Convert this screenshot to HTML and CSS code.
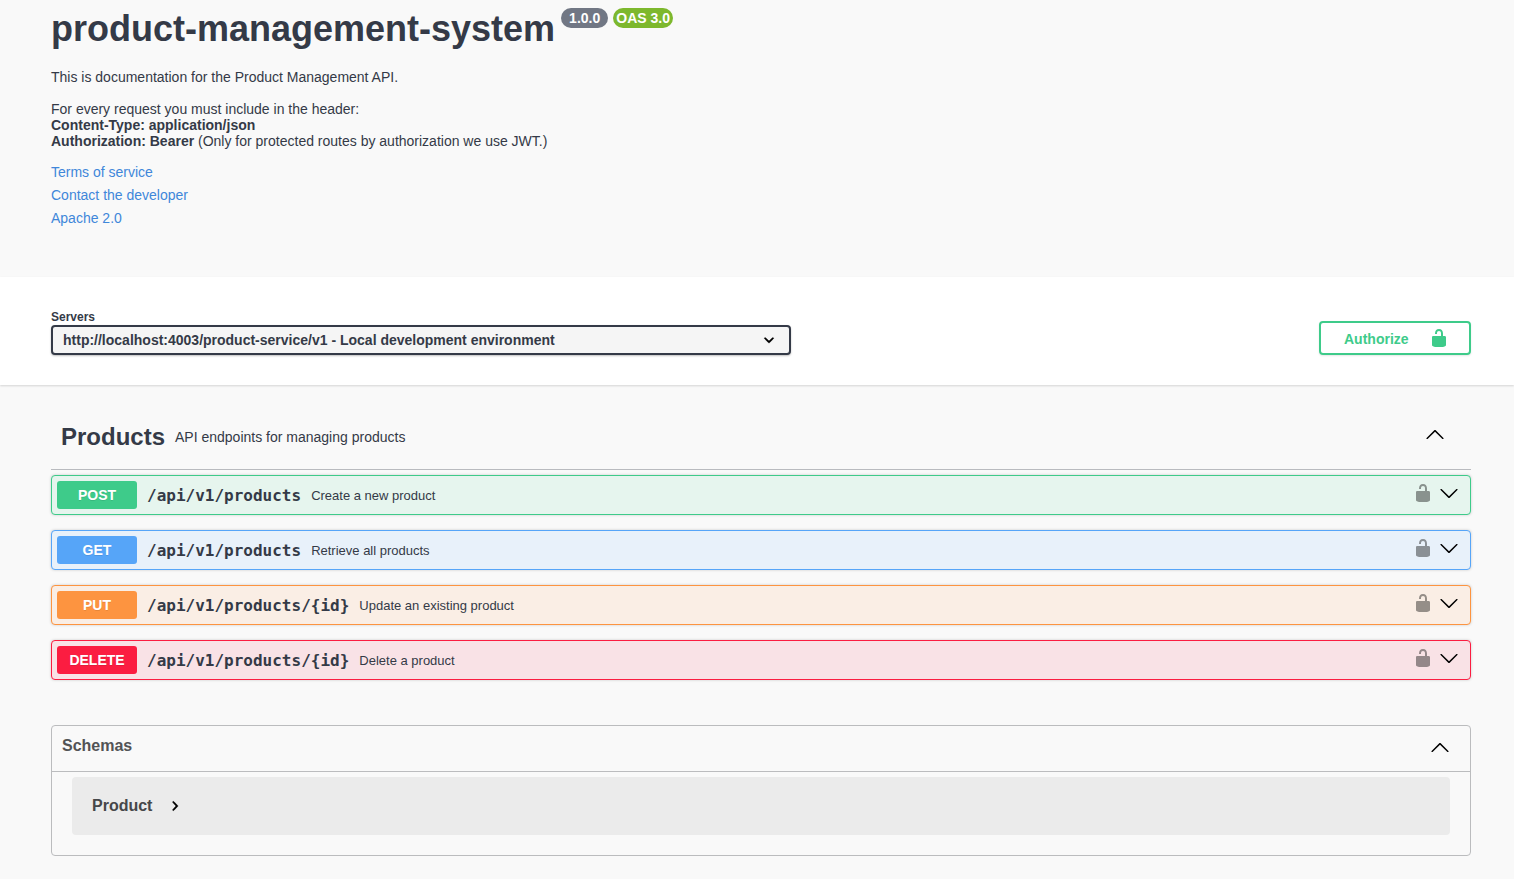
FILE: index.html
```html
<!DOCTYPE html>
<html lang="en">
<head>
<meta charset="utf-8">
<meta name="viewport" content="width=device-width, initial-scale=1">
<title>product-management-system</title>
<link rel="stylesheet" href="styles.css">
</head>
<body>
<svg class="sprite" aria-hidden="true">
  <symbol id="unlocked" viewBox="0 0 20 20"><path d="M15.8 8H14V5.6C14 2.703 12.665 1 10 1 7.334 1 6 2.703 6 5.6V6h2v-.801C8 3.754 8.797 3 10 3c1.203 0 2 .754 2 2.199V8H4c-.553 0-1 .646-1 1.199V17c0 .549.428 1.139.951 1.307l1.197.387C5.672 18.861 6.55 19 7.1 19h5.8c.549 0 1.428-.139 1.951-.307l1.196-.387c.524-.167.953-.757.953-1.306V9.199C17 8.646 16.352 8 15.8 8z"/></symbol>
  <symbol id="arrow-up" viewBox="0 0 20 20"><path d="M17.418 14.908c.272.268.709.268.979 0s.271-.701 0-.969l-7.908-7.83c-.27-.268-.707-.268-.979 0l-7.908 7.83c-.27.268-.27.701 0 .969.271.268.709.268.979 0L10 7.767l7.418 7.141z"/></symbol>
  <symbol id="arrow-down" viewBox="0 0 20 20"><path d="M17.418 6.109c.272-.268.709-.268.979 0s.271.701 0 .969l-7.908 7.83c-.27.268-.707.268-.979 0l-7.908-7.83c-.27-.268-.27-.701 0-.969.271-.268.709-.268.979 0L10 13.25l7.418-7.141z"/></symbol>
  <symbol id="chevron" viewBox="0 0 20 20"><path stroke="currentColor" stroke-width=".5" d="M13.418 7.859c.271-.268.709-.268.978 0 .27.268.272.701 0 .969l-3.908 3.83c-.27.268-.707.268-.979 0l-3.908-3.83c-.27-.267-.27-.701 0-.969.271-.268.709-.268.978 0L10 11l3.418-3.141z"/></symbol>
</svg>

<header class="wrapper info">
  <h1 class="title">product-management-system
    <span class="badges"><span class="badge">1.0.0</span><span class="badge badge-oas">OAS 3.0</span></span>
  </h1>
  <p>This is documentation for the Product Management API.</p>
  <p>For every request you must include in the header:<br>
  <strong>Content-Type: application/json</strong><br>
  <strong>Authorization: Bearer</strong> (Only for protected routes by authorization we use JWT.)</p>
  <ul class="links">
    <li><a href="#terms">Terms of service</a></li>
    <li><a href="#contact">Contact the developer</a></li>
    <li><a href="#license">Apache 2.0</a></li>
  </ul>
</header>

<section class="scheme">
  <div class="wrapper scheme-row">
    <div class="servers">
      <label for="servers">Servers</label>
      <div class="select-box">
        <select id="servers">
          <option>http://localhost:4003/product-service/v1 - Local development environment</option>
        </select>
        <svg class="icon" aria-hidden="true"><use href="#chevron"/></svg>
      </div>
    </div>
    <button class="authorize" type="button"><span>Authorize</span><svg class="icon" aria-hidden="true"><use href="#unlocked"/></svg></button>
  </div>
</section>

<main class="wrapper">
  <section>
    <div class="tag">
      <h2>Products</h2>
      <p>API endpoints for managing products</p>
      <button class="toggle" type="button" aria-label="Collapse Products"><svg class="icon" aria-hidden="true"><use href="#arrow-up"/></svg></button>
    </div>
    <div class="operations">
      <div class="operation post">
        <span class="method">POST</span><span class="path">/api/v1/products</span><span class="summary">Create a new product</span>
        <button class="lock" type="button" aria-label="Authorize POST"><svg class="icon" aria-hidden="true"><use href="#unlocked"/></svg></button>
        <button class="toggle" type="button" aria-label="Expand POST"><svg class="icon" aria-hidden="true"><use href="#arrow-down"/></svg></button>
      </div>
      <div class="operation get">
        <span class="method">GET</span><span class="path">/api/v1/products</span><span class="summary">Retrieve all products</span>
        <button class="lock" type="button" aria-label="Authorize GET"><svg class="icon" aria-hidden="true"><use href="#unlocked"/></svg></button>
        <button class="toggle" type="button" aria-label="Expand GET"><svg class="icon" aria-hidden="true"><use href="#arrow-down"/></svg></button>
      </div>
      <div class="operation put">
        <span class="method">PUT</span><span class="path">/api/v1/products/{id}</span><span class="summary">Update an existing product</span>
        <button class="lock" type="button" aria-label="Authorize PUT"><svg class="icon" aria-hidden="true"><use href="#unlocked"/></svg></button>
        <button class="toggle" type="button" aria-label="Expand PUT"><svg class="icon" aria-hidden="true"><use href="#arrow-down"/></svg></button>
      </div>
      <div class="operation delete">
        <span class="method">DELETE</span><span class="path">/api/v1/products/{id}</span><span class="summary">Delete a product</span>
        <button class="lock" type="button" aria-label="Authorize DELETE"><svg class="icon" aria-hidden="true"><use href="#unlocked"/></svg></button>
        <button class="toggle" type="button" aria-label="Expand DELETE"><svg class="icon" aria-hidden="true"><use href="#arrow-down"/></svg></button>
      </div>
    </div>
  </section>

  <section class="models">
    <h2><button class="models-head" type="button"><span>Schemas</span><svg class="icon" aria-hidden="true"><use href="#arrow-up"/></svg></button></h2>
    <div class="models-body">
      <button class="model" type="button"><span>Product</span><svg class="icon icon-right" aria-hidden="true"><use href="#chevron"/></svg></button>
    </div>
  </section>
</main>
</body>
</html>
```

FILE: styles.css
```css
* {
  box-sizing: border-box;
}

body {
  margin: 0;
  background: #f9f9f9;
  color: #343a47;
  font: 14px/16px "Liberation Sans", Arial, sans-serif;
}

h1, h2, p, ul {
  margin: 0;
  padding: 0;
}

button, select {
  margin: 0;
  padding: 0;
  border: 0;
  background: none;
  color: inherit;
  font: inherit;
  cursor: pointer;
}

.sprite {
  display: none;
}

.icon {
  display: block;
  flex: none;
  width: 20px;
  height: 20px;
  fill: currentColor;
}

.wrapper {
  max-width: 1522px;
  padding: 0 43px 0 51px;
}

/* API description */
.info {
  padding-top: 8px;
  padding-bottom: 44px;
}

.title {
  display: flex;
  align-items: flex-start;
  gap: 6px;
  margin-bottom: 20px;
  font-size: 36px;
  line-height: 41px;
}

.badges {
  display: flex;
  gap: 5px;
}

.badge {
  padding: 2px 8px;
  border-radius: 10px;
  background: #717784;
  color: #fff;
  font-size: 14px;
  line-height: 16px;
}

.badge-oas {
  padding: 2px 3px;
  background: #7db82d;
}

.info p + p {
  margin: 16px 0 15px;
}

.links {
  list-style: none;
}

.links li {
  padding-bottom: 7px;
}

.links a {
  color: #3f87da;
  text-decoration: none;
}

/* Server selection */
.scheme {
  padding: 32px 0 30px;
  background: #fff;
  box-shadow: 0 1px 2px rgba(0, 0, 0, .15);
}

.scheme-row {
  display: flex;
  align-items: flex-end;
  justify-content: space-between;
}

.servers {
  flex: 0 1 740px;
  min-width: 0;
}

.servers label {
  display: block;
  font-size: 12px;
  font-weight: 700;
}

.select-box {
  display: grid;
  align-items: center;
}

.select-box > * {
  grid-area: 1 / 1;
}

.select-box .icon {
  justify-self: end;
  margin-right: 12px;
  color: #000;
  pointer-events: none;
}

select {
  width: 100%;
  height: 30px;
  padding: 0 40px 0 10px;
  border: 2px solid #343a47;
  border-radius: 4px;
  background: #f5f5f5;
  box-shadow: 0 1px 2px rgba(0, 0, 0, .25);
  font-weight: 700;
  appearance: none;
}

.authorize {
  display: flex;
  align-items: center;
  justify-content: space-between;
  width: 152px;
  height: 34px;
  padding: 0 20px 0 23px;
  border: 2px solid #3ecb8a;
  border-radius: 4px;
  box-shadow: 0 1px 2px rgba(0, 0, 0, .1);
  color: #3ecb8a;
  font-weight: 700;
}

.authorize span {
  padding-top: 2px;
}

/* Operations */
.tag {
  display: flex;
  align-items: center;
  gap: 10px;
  margin-top: 36px;
  padding: 0 26px 16px 10px;
  border-bottom: 1px solid #b9bbbf;
}

.tag h2 {
  font-size: 24px;
  line-height: 32px;
}

.toggle {
  padding-bottom: 4px;
  color: #000;
}

.tag .toggle {
  margin-left: auto;
  padding-bottom: 6px;
}

.operations {
  display: grid;
  gap: 15px;
  padding-top: 5px;
}

.operation {
  display: flex;
  align-items: center;
  gap: 10px;
  padding: 5px 11px 5px 5px;
  border: 1px solid;
  border-radius: 4px;
  box-shadow: 0 0 3px rgba(0, 0, 0, .19);
}

.method {
  width: 80px;
  padding: 6px 0;
  border-radius: 3px;
  color: #fff;
  font-weight: 700;
  text-align: center;
  text-shadow: 0 1px 0 rgba(0, 0, 0, .1);
}

.path {
  padding-top: 2px;
  font: 700 16px/18px "DejaVu Sans Mono", monospace;
}

.summary {
  flex: 1;
  padding-top: 2px;
  font-size: 13px;
}

.lock {
  margin-right: -4px;
  padding-bottom: 4px;
  color: #000;
  opacity: .4;
}

.post {
  border-color: #3ecb8a;
  background: #e6f5ee;
}

.post .method {
  background: #3ecb8a;
}

.get {
  border-color: #56a5f8;
  background: #e8f1fa;
}

.get .method {
  background: #56a5f8;
}

.put {
  border-color: #fd9440;
  background: #faeee5;
}

.put .method {
  background: #fd9440;
}

.delete {
  border-color: #fb1d41;
  background: #f9e2e6;
}

.delete .method {
  background: #fb1d41;
}

/* Schemas */
.models {
  margin: 45px 0 24px;
  border: 1px solid #bbbcbe;
  border-radius: 4px;
}

.models-head {
  display: flex;
  align-items: center;
  justify-content: space-between;
  width: 100%;
  padding: 10px 20px 13px 10px;
  border-bottom: 1px solid #bbbcbe;
  color: #525355;
  font-size: 16px;
  font-weight: 700;
  line-height: 20px;
}

.models-head span {
  padding-bottom: 2px;
}

.models-head .icon {
  color: #000;
}

.models-body {
  padding: 5px 20px 20px;
}

.model {
  display: flex;
  align-items: center;
  gap: 13px;
  width: 100%;
  padding: 19px 20px;
  border-radius: 4px;
  background: #ebebeb;
  color: #464749;
  font-size: 16px;
  font-weight: 700;
  line-height: 20px;
}

.icon-right {
  color: #000;
  transform: rotate(-90deg);
}
```
